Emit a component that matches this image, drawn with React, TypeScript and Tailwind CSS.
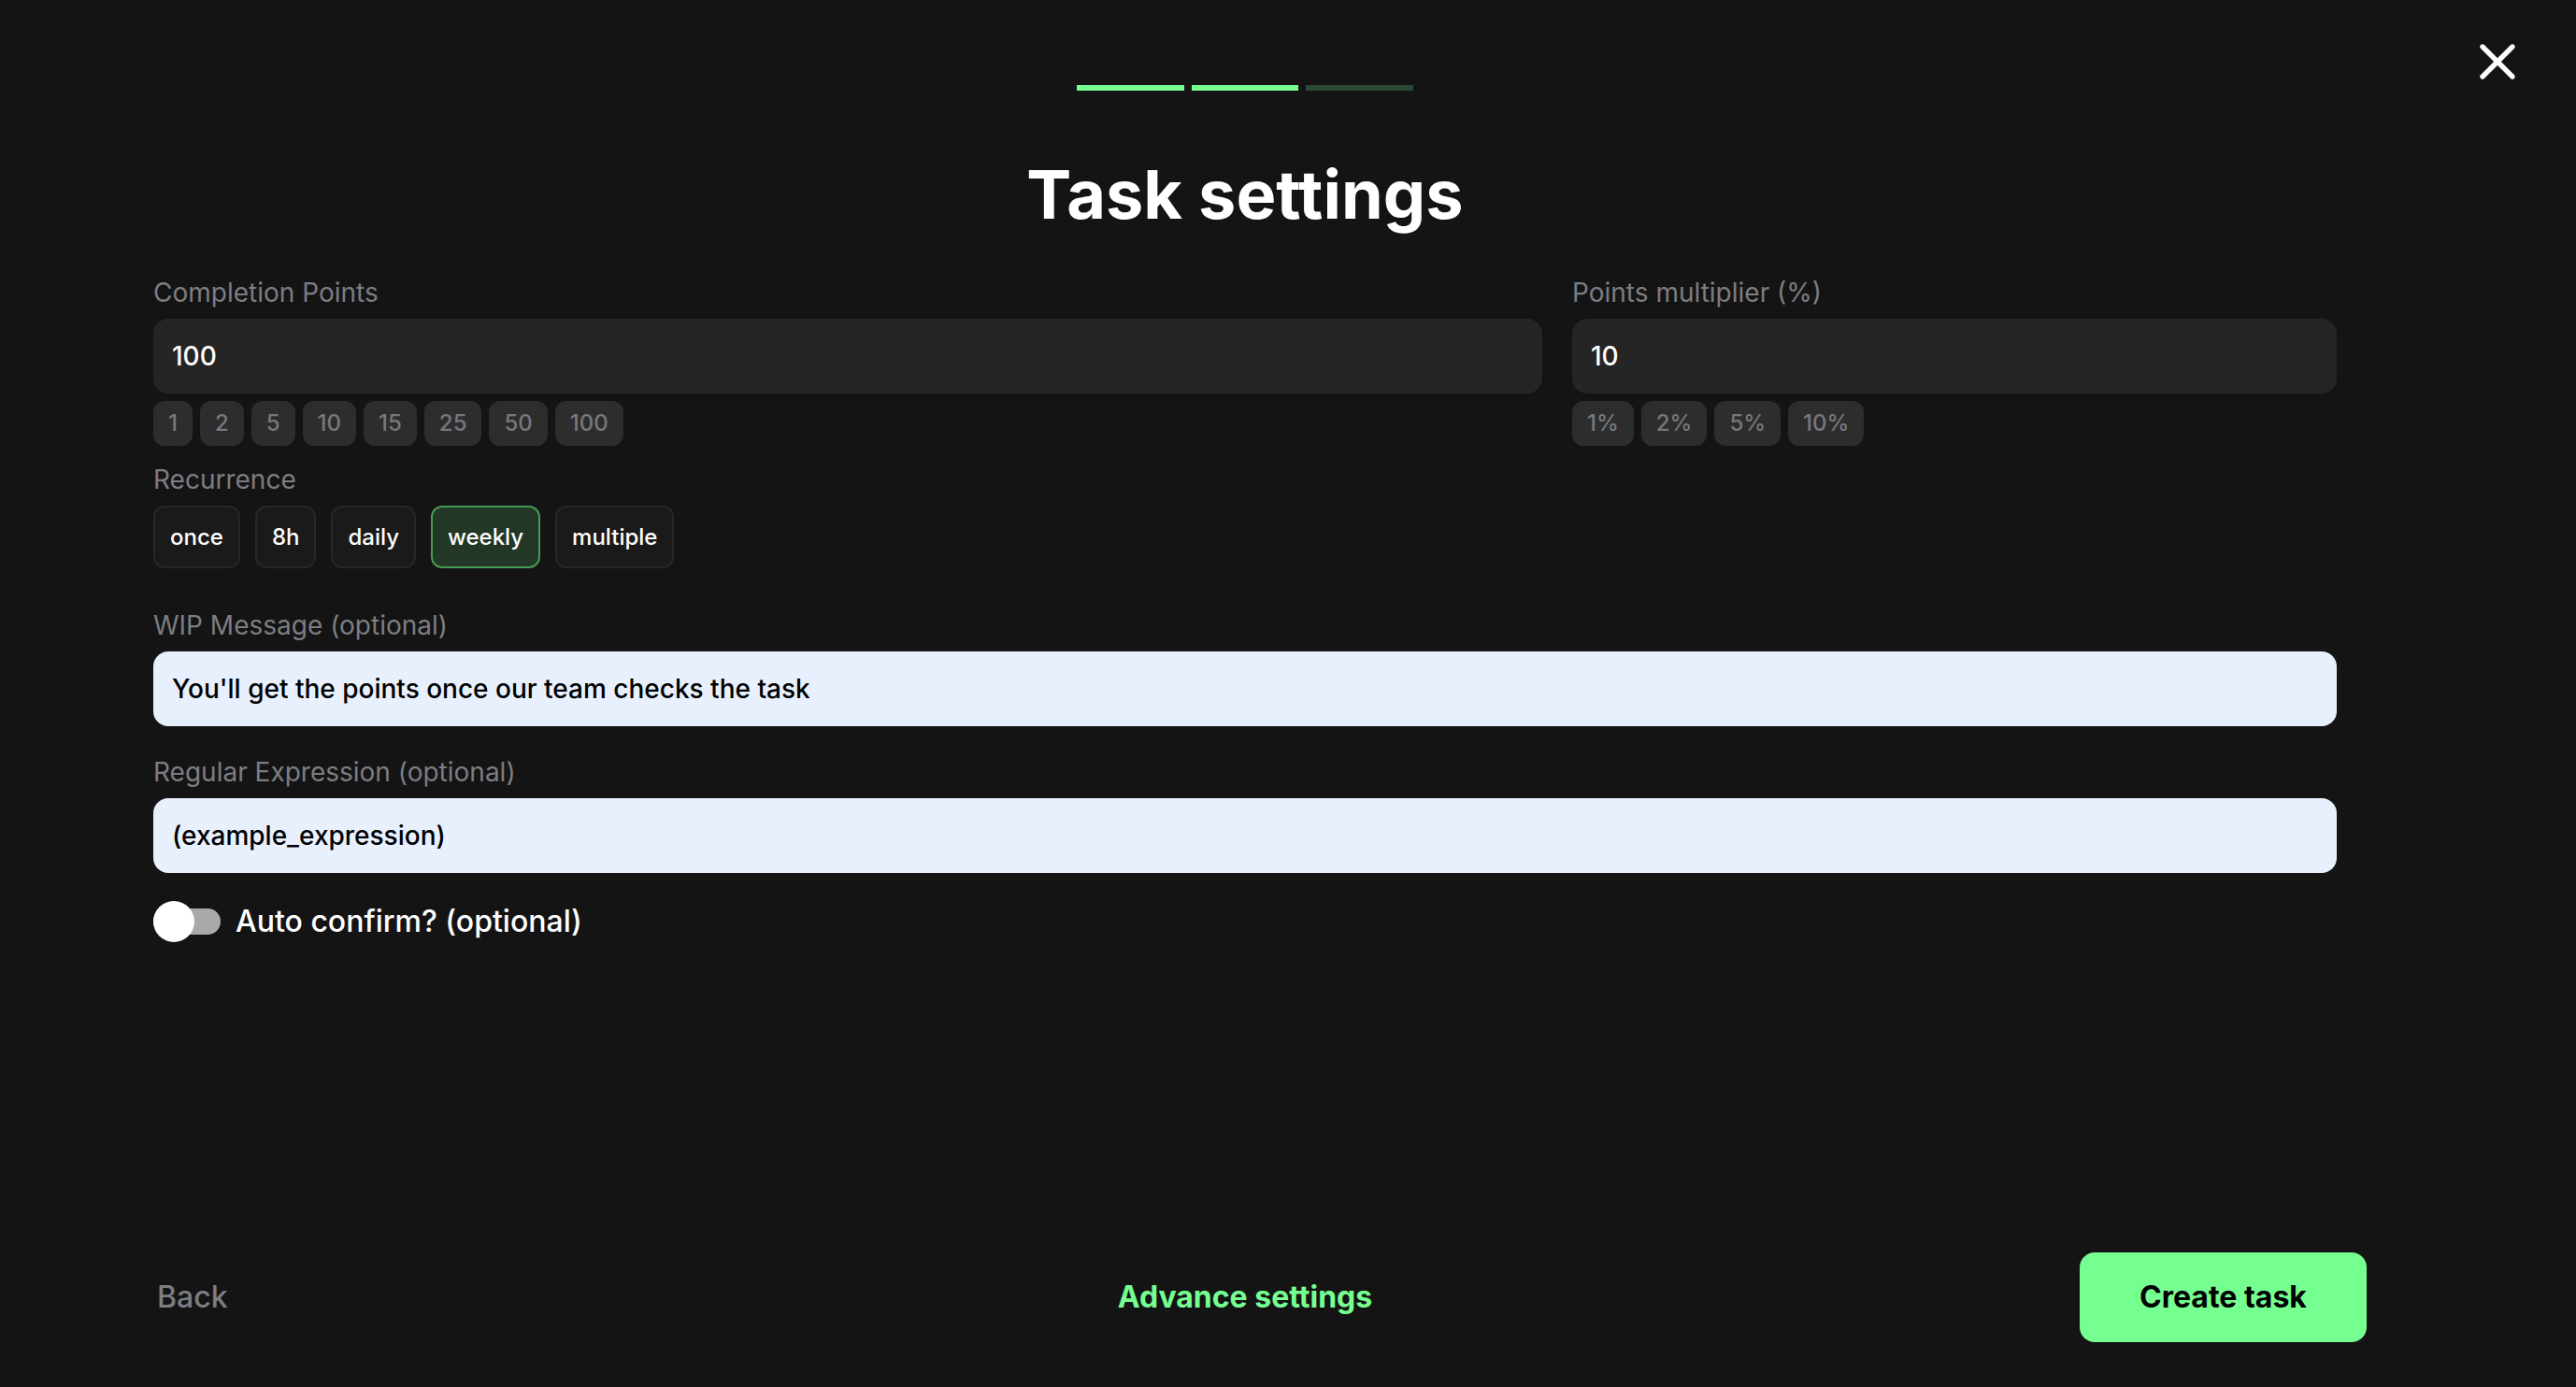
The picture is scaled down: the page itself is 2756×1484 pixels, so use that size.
import { X } from "lucide-react";

const pointOptions = ["1", "2", "5", "10", "15", "25", "50", "100"];
const percentOptions = ["1%", "2%", "5%", "10%"];
const recurrences = ["once", "8h", "daily", "weekly", "multiple"];

function Label({ children, className = "" }: { children: React.ReactNode; className?: string }) {
  return <label className={`block h-9 mb-2.5 text-[28px] leading-9 text-[#7d7d82] ${className}`}>{children}</label>;
}

function DarkInput({ value }: { value: string }) {
  return (
    <input
      className="block w-full h-20 rounded-2xl bg-[#252525] px-5 text-[28px] font-medium text-white outline-none"
      defaultValue={value}
    />
  );
}

function LightInput({ value }: { value: string }) {
  return (
    <input
      className="block w-full h-20 rounded-2xl bg-[#e8f0fe] px-5 text-[28px] font-medium text-black outline-none"
      defaultValue={value}
    />
  );
}

function Chips({ items }: { items: string[] }) {
  return (
    <div className="flex gap-2 mt-2">
      {items.map(item => (
        <button key={item} className="h-12 rounded-xl bg-[#2d2d2d] px-4 text-2xl font-medium text-[#77777d]">
          {item}
        </button>
      ))}
    </div>
  );
}

export default function App() {
  return (
    <div className="relative flex flex-col h-[1484px] bg-[#141414] font-['Inter',sans-serif]">
      <button className="absolute top-[34px] right-[52px] text-white">
        <X size={64} strokeWidth={2} />
      </button>

      {/* Step indicator */}
      <div className="flex justify-center gap-2 pt-[91px] mr-[92px]">
        <div className="w-[115px] h-1.5 bg-[#76ff91]" />
        <div className="w-[114px] h-1.5 bg-[#76ff91]" />
        <div className="w-[115px] h-1.5 bg-[#284a30]" />
      </div>

      <h1 className="mt-[67px] mr-[92px] h-[88px] text-center text-[72px] leading-[88px] font-bold text-white">
        Task settings
      </h1>

      <form className="ml-[164px] w-[2336px] mt-[43px]">
        <div className="flex gap-8">
          <div className="w-[1486px]">
            <Label>Completion Points</Label>
            <DarkInput value="100" />
            <Chips items={pointOptions} />
          </div>
          <div className="flex-1">
            <Label>Points multiplier (%)</Label>
            <DarkInput value="10" />
            <Chips items={percentOptions} />
          </div>
        </div>

        <Label className="mt-[18px]">Recurrence</Label>
        <div className="flex gap-4">
          {recurrences.map(r => (
            <button
              key={r}
              className={
                r === "weekly"
                  ? "h-[67px] rounded-xl border-2 border-[#479a55] bg-[#223725] px-4 text-2xl font-medium text-white"
                  : "h-[67px] rounded-xl border-2 border-[#272727] bg-[#1a1a1a] px-4 text-2xl font-medium text-white"
              }
            >
              {r}
            </button>
          ))}
        </div>

        <Label className="mt-[43px]">WIP Message (optional)</Label>
        <LightInput value="You'll get the points once our team checks the task" />

        <Label className="mt-[31px]">Regular Expression (optional)</Label>
        <LightInput value="(example_expression)" />

        <div className="flex items-center gap-4 mt-[30px]">
          <div className="relative w-[72px] h-7 rounded-full bg-[#a9a9a9]">
            <div className="absolute -top-2 left-0 size-11 rounded-full bg-white" />
          </div>
          <span className="text-[32px] leading-[44px] font-medium text-white">Auto confirm? (optional)</span>
        </div>
      </form>

      {/* Footer */}
      <div className="mt-auto mb-12 ml-[164px] mr-[224px] grid grid-cols-3 items-center">
        <button className="justify-self-start pl-1 text-[32px] font-medium text-[#7d7d82]">Back</button>
        <button className="justify-self-center ml-[-32px] text-[32px] font-bold text-[#76ff91]">
          Advance settings
        </button>
        <button className="justify-self-end w-[307px] h-24 rounded-2xl bg-[#76ff91] text-[32px] font-bold text-black">
          Create task
        </button>
      </div>
    </div>
  );
}
